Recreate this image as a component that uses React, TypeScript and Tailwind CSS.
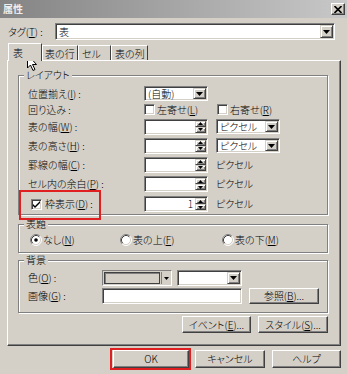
import React from "react";

const Arrow = () => (
  <svg width="7" height="4" viewBox="0 0 7 4">
    <polygon points="0,0 7,0 3.5,4" fill="#000" />
  </svg>
);

const DropBtn = () => (
  <div className="w-[13px] h-full flex items-center justify-center bg-[#d4d0c8] border border-t-[#d4d0c8] border-l-[#d4d0c8] border-r-[#404040] border-b-[#404040] shadow-[inset_1px_1px_0_#fff,inset_-1px_-1px_0_#808080]">
    <Arrow />
  </div>
);

const Combo = ({ w, h, text }: { w: string; h: string; text: string }) => (
  <div className={`flex bg-white p-[1px] border border-t-[#808080] border-l-[#808080] border-r-white border-b-white shadow-[inset_1px_1px_0_#404040,inset_-1px_-1px_0_#d4d0c8] ${w} ${h}`}>
    <div className="flex-1 pl-[2px] flex items-center">{text}</div>
    <DropBtn />
  </div>
);

const SpinHalf = ({ up }: { up: boolean }) => (
  <div className="flex-1 flex items-center justify-center bg-[#d4d0c8] border border-t-[#d4d0c8] border-l-[#d4d0c8] border-r-[#404040] border-b-[#404040] shadow-[inset_1px_1px_0_#fff,inset_-1px_-1px_0_#808080]">
    <svg width="5" height="3" viewBox="0 0 5 3">
      {up ? <polygon points="0,3 5,3 2.5,0" fill="#000" /> : <polygon points="0,0 5,0 2.5,3" fill="#000" />}
    </svg>
  </div>
);

const Spinner = ({ value = "" }: { value?: string }) => (
  <div className="flex w-[64px] h-[16px] bg-white p-[1px] border border-t-[#808080] border-l-[#808080] border-r-white border-b-white shadow-[inset_1px_1px_0_#404040,inset_-1px_-1px_0_#d4d0c8]">
    <div className="flex-1 flex items-center justify-end pr-[2px]">{value}</div>
    <div className="w-[11px] flex flex-col">
      <SpinHalf up />
      <SpinHalf up={false} />
    </div>
  </div>
);

const Check = ({ checked = false }: { checked?: boolean }) => (
  <div className="w-[11px] h-[11px] shrink-0 bg-white flex items-center justify-center border border-t-[#808080] border-l-[#808080] border-r-white border-b-white shadow-[inset_1px_1px_0_#404040,inset_-1px_-1px_0_#d4d0c8]">
    {checked && (
      <svg width="7" height="7" viewBox="0 0 7 7">
        <path d="M0 3 L2 5 L7 0 L7 2 L2 7 L0 5 Z" fill="#000" />
      </svg>
    )}
  </div>
);

const Radio = ({ on = false }: { on?: boolean }) => (
  <svg width="12" height="12" viewBox="0 0 12 12" className="shrink-0">
    <circle cx="6" cy="6" r="5" fill="#fff" />
    <path d="M2.11 9.89 A5.5 5.5 0 0 1 9.89 2.11" stroke="#808080" fill="none" />
    <path d="M9.89 2.11 A5.5 5.5 0 0 1 2.11 9.89" stroke="#fff" fill="none" />
    <path d="M2.82 9.18 A4.5 4.5 0 0 1 9.18 2.82" stroke="#404040" fill="none" />
    <path d="M9.18 2.82 A4.5 4.5 0 0 1 2.82 9.18" stroke="#d4d0c8" fill="none" />
    {on && <circle cx="6" cy="6" r="1.8" fill="#000" />}
  </svg>
);

const Button = ({ w, h, children }: { w: string; h: string; children: React.ReactNode }) => (
  <div className={`flex items-center justify-center bg-[#d4d0c8] border border-t-white border-l-white border-r-[#404040] border-b-[#404040] shadow-[inset_-1px_-1px_0_#808080] ${w} ${h}`}>
    {children}
  </div>
);

const Group = ({ label, cls, children }: { label: string; cls: string; children: React.ReactNode }) => (
  <div className={`relative border border-[#808080] shadow-[inset_1px_1px_0_#fff,1px_1px_0_#fff] ${cls}`}>
    <div className="absolute top-[-7px] left-[5px] px-[2px] bg-[#d4d0c8] leading-[12px]">{label}</div>
    {children}
  </div>
);

const U = ({ children }: { children: React.ReactNode }) => <u className="underline underline-offset-1">{children}</u>;

export default function App() {
  return (
    <div className="w-[347px] h-[374px] bg-[#d4d0c8] relative overflow-hidden text-[10px] leading-none text-black font-light font-['Noto_Sans_CJK_JP',sans-serif] [font-feature-settings:'palt']">
      {/* title bar */}
      <div className="h-[18px] bg-linear-to-r from-[#848484] to-[#c8c8c8] flex items-center justify-between pl-[3px] pr-[2px]">
        <span className="text-[#eeeeee] font-bold text-[10px]">属性</span>
        <Button w="w-[14px]" h="h-[12px]">
          <svg width="8" height="7" viewBox="0 0 8 7">
            <path d="M0.5 0 L7.5 7 M7.5 0 L0.5 7" stroke="#000" strokeWidth="1.6" />
          </svg>
        </Button>
      </div>

      {/* tag row */}
      <div className="mt-[5px] h-[17px] flex items-center">
        <div className="pl-[8px] w-[55px]">タグ(<U>T</U>) :</div>
        <Combo w="w-[280px]" h="h-[17px]" text="表" />
      </div>

      {/* tabs */}
      <div className="mt-[3px] h-[17px] pl-[8px] flex items-end">
        <div className="relative z-10 w-[34px] h-[18px] -mb-px bg-[#d4d0c8] border-t border-l border-white border-r border-r-[#404040] pl-[4px] pt-[4px]">表</div>
        <div className="w-[36px] h-[15px] border-t border-l border-white border-r border-r-[#404040] pl-[2px] pt-[3px] whitespace-nowrap">表の行</div>
        <div className="w-[33px] h-[15px] border-t border-l border-white border-r border-r-[#404040] pl-[3px] pt-[3px] whitespace-nowrap">セル</div>
        <div className="w-[37px] h-[15px] border-t border-l border-white border-r border-r-[#404040] pl-[3px] pt-[3px] whitespace-nowrap">表の列</div>
      </div>

      {/* panel */}
      <div className="ml-[7px] w-[334px] h-[286px] border border-t-white border-l-white border-r-[#404040] border-b-[#404040] shadow-[inset_-1px_-1px_0_#808080] pl-[10px] pt-[14px]">
        <Group label="レイアウト" cls="w-[310px] h-[140px] pl-[9px] pt-[9px]">
          <div className="h-[17px] flex items-center">
            <div className="w-[116px]">位置揃え(<U>I</U>) :</div>
            <Combo w="w-[64px]" h="h-[15px]" text="(自動)" />
          </div>
          <div className="h-[15px] flex items-center">
            <div className="w-[116px]">回り込み :</div>
            <div className="w-[73px] flex items-center gap-[2px]">
              <Check />
              <span>左寄せ(<U>L</U>)</span>
            </div>
            <div className="flex items-center gap-[2px]">
              <Check />
              <span>右寄せ(<U>R</U>)</span>
            </div>
          </div>
          <div className="h-[19px] flex items-center">
            <div className="w-[116px]">表の幅(<U>W</U>) :</div>
            <Spinner />
            <div className="ml-[8px]"><Combo w="w-[64px]" h="h-[15px]" text="ピクセル" /></div>
          </div>
          <div className="h-[19px] flex items-center">
            <div className="w-[116px]">表の高さ(<U>H</U>) :</div>
            <Spinner />
            <div className="ml-[8px]"><Combo w="w-[64px]" h="h-[15px]" text="ピクセル" /></div>
          </div>
          <div className="h-[19px] flex items-center">
            <div className="w-[116px]">罫線の幅(<U>C</U>) :</div>
            <Spinner />
            <div className="ml-[8px]">ピクセル</div>
          </div>
          <div className="h-[20px] flex items-center">
            <div className="w-[116px]">セル内の余白(<U>P</U>) :</div>
            <Spinner />
            <div className="ml-[8px]">ピクセル</div>
          </div>
          <div className="h-[20px] flex items-center">
            <div className="w-[116px] pl-[3px] flex items-center gap-[3px]">
              <Check checked />
              <span>枠表示(<U>D</U>) :</span>
            </div>
            <Spinner value="1" />
            <div className="ml-[8px]">ピクセル</div>
          </div>
        </Group>

        <Group label="表題" cls="mt-[9px] w-[310px] h-[29px] pl-[11px] pt-[7px]">
          <div className="h-[16px] flex items-center">
            <div className="w-[90px] flex items-center gap-[1px]">
              <Radio on />
              <span>なし(<U>N</U>)</span>
            </div>
            <div className="w-[102px] flex items-center gap-[1px]">
              <Radio />
              <span>表の上(<U>F</U>)</span>
            </div>
            <div className="flex items-center gap-[1px]">
              <Radio />
              <span>表の下(<U>M</U>)</span>
            </div>
          </div>
        </Group>

        <Group label="背景" cls="mt-[7px] w-[310px] h-[53px] pl-[9px] pt-[9px]">
          <div className="h-[16px] flex items-center">
            <div className="w-[74px]">色(<U>O</U>) :</div>
            <div className="w-[70px] h-[16px] flex p-[1px] bg-[#d4d0c8] border border-t-[#808080] border-l-[#808080] border-r-white border-b-white">
              <div className="flex-1 border border-[#404040] shadow-[inset_1px_1px_0_#808080]" />
              <div className="w-[1px] ml-[1px] bg-[#808080]" />
              <div className="w-[8px] flex items-center justify-center">
                <svg width="5" height="3" viewBox="0 0 5 3"><polygon points="0,0 5,0 2.5,3" fill="#000" /></svg>
              </div>
            </div>
            <div className="ml-[5px]"><Combo w="w-[65px]" h="h-[16px]" text="" /></div>
          </div>
          <div className="mt-[2px] h-[16px] flex items-center">
            <div className="w-[74px]">画像(<U>G</U>) :</div>
            <div className="w-[140px] h-[16px] bg-white border border-t-[#808080] border-l-[#808080] border-r-white border-b-white shadow-[inset_1px_1px_0_#404040,inset_-1px_-1px_0_#d4d0c8]" />
            <div className="ml-[7px]"><Button w="w-[70px]" h="h-[16px]">参照(<U>B</U>)...</Button></div>
          </div>
        </Group>

        <div className="mt-[3px] w-[310px] flex justify-end gap-[7px]">
          <Button w="w-[69px]" h="h-[17px]">イベント(<U>E</U>)...</Button>
          <Button w="w-[70px]" h="h-[17px]">スタイル(<U>S</U>)...</Button>
        </div>
      </div>

      {/* bottom buttons */}
      <div className="mt-[4px] flex justify-end pr-[6px]">
        <Button w="w-[76px]" h="h-[18px]">OK</Button>
        <div className="ml-[6px]"><Button w="w-[70px]" h="h-[18px]">キャンセル</Button></div>
        <div className="ml-[7px]"><Button w="w-[69px]" h="h-[18px]">ヘルプ</Button></div>
      </div>

      {/* annotations */}
      <div className="absolute left-[19px] top-[190px] w-[82px] h-[30px] border-2 border-[#e02020]" />
      <div className="absolute left-[110px] top-[348px] w-[81px] h-[22px] border-2 border-[#e02020]" />

      {/* cursor */}
      <svg className="absolute left-[27px] top-[54px]" width="12" height="18" viewBox="0 0 12 18">
        <path d="M0.5 0.5 L0.5 14 L3.5 11 L6 16.5 L8 15.5 L5.5 10.5 L9.5 10.5 Z" fill="#fff" stroke="#000" strokeWidth="1" />
      </svg>
    </div>
  );
}
